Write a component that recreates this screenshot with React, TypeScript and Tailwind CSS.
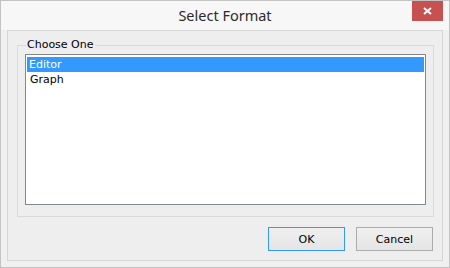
export default function App() {
  return (
    <div className="w-[450px] h-[268px] border border-[#c3c3c3] bg-[#f0f0f0] flex flex-col font-['DejaVu_Sans',sans-serif] text-[11px] text-black">
      {/* Title bar */}
      <div className="relative h-[29px] shrink-0 bg-[#f7f7f7] flex items-center justify-center">
        <span className="font-['Noto_Sans',sans-serif] text-[14.5px] text-[#2b2b2b] leading-none">Select Format</span>
        <button className="absolute right-[6px] top-0 w-[31px] h-[20px] bg-[#c75050] flex items-center justify-center">
          <svg width="9" height="8" viewBox="0 0 9 8">
            <path d="M1 1 L8 7 M8 1 L1 7" stroke="#fff" strokeWidth="2" />
          </svg>
        </button>
      </div>

      {/* Content */}
      <div className="flex-1 px-[6px] pb-[6px] flex flex-col">
        <div className="flex-1 border border-[#d6d6d6] bg-[#eeeeee] flex flex-col pl-[9px] pr-[8px] pt-[14px]">
          {/* Group box */}
          <div className="relative h-[172px] border border-[#dadada] px-[7px] pt-[8px] pb-[11px] flex flex-col">
            <span className="absolute left-[8px] top-[-9px] bg-[#eeeeee] px-[1px] leading-[16px]">Choose One</span>
            <div className="flex-1 border border-[#828790] bg-white pl-[1px] pr-[1px] pt-[2px]">
              <div className="h-[15px] bg-[#3399ff] text-white pl-[2px] leading-[15px]">Editor</div>
              <div className="h-[15px] pl-[3px] leading-[15px]">Graph</div>
            </div>
          </div>

          {/* Buttons */}
          <div className="flex justify-end gap-[11px] mt-[10px] pr-[1px]">
            <button className="w-[77px] h-[24px] border border-[#3399ff] bg-gradient-to-b from-[#f0f0f0] to-[#e5e5e5] leading-none">OK</button>
            <button className="w-[77px] h-[24px] border border-[#acacac] bg-gradient-to-b from-[#f0f0f0] to-[#e5e5e5] leading-none">Cancel</button>
          </div>
        </div>
      </div>
    </div>
  )
}
